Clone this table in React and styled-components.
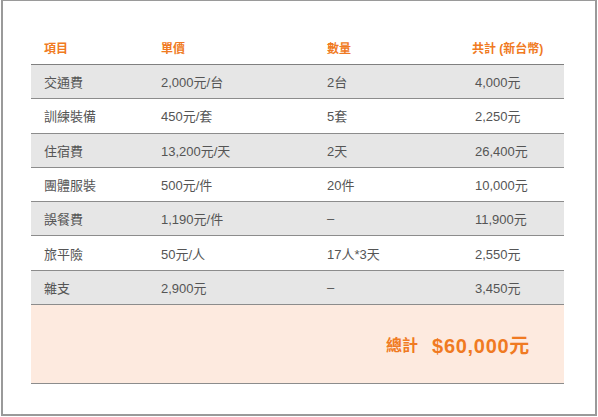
import styled, { createGlobalStyle } from "styled-components"

const GlobalStyle = createGlobalStyle`
  html, body {
    margin: 0;
    padding: 0;
    background: #ffffff;
  }
  body {
    font-family: "Liberation Sans", "Noto Sans CJK TC", sans-serif;
  }
`

const rows = [
  { item: "交通費", price: "2,000元/台", qty: "2台", total: "4,000元" },
  { item: "訓練裝備", price: "450元/套", qty: "5套", total: "2,250元" },
  { item: "住宿費", price: "13,200元/天", qty: "2天", total: "26,400元" },
  { item: "團體服裝", price: "500元/件", qty: "20件", total: "10,000元" },
  { item: "誤餐費", price: "1,190元/件", qty: "–", total: "11,900元" },
  { item: "旅平險", price: "50元/人", qty: "17人*3天", total: "2,550元" },
  { item: "雜支", price: "2,900元", qty: "–", total: "3,450元" },
]

function App() {
  return (
    <>
      <GlobalStyle />
      <Frame>
        <Table>
          <HeadRow>
            <HeadCell>項目</HeadCell>
            <HeadCell>單價</HeadCell>
            <HeadCell>數量</HeadCell>
            <HeadCell $last>共計 (新台幣)</HeadCell>
          </HeadRow>
          {rows.map((r, i) => (
            <Row key={r.item} $shaded={i % 2 === 0}>
              <Cell>{r.item}</Cell>
              <Cell>{r.price}</Cell>
              <Cell>{r.qty}</Cell>
              <Cell>{r.total}</Cell>
            </Row>
          ))}
          <TotalRow>
            <TotalLabel>總計</TotalLabel>
            <TotalValue>$60,000元</TotalValue>
          </TotalRow>
        </Table>
      </Frame>
    </>
  )
}

export default App

const Frame = styled.div`
  box-sizing: border-box;
  width: 596px;
  height: 416px;
  margin: 0 0 0 1px;
  border: 2px solid #9a9a9a;
  border-top-width: 1px;
  padding: 29px 31px 0 28px;
`

const Table = styled.div`
  width: 533px;
`

const cols = `117px 166px 148px 102px`

const HeadRow = styled.div`
  display: grid;
  grid-template-columns: ${cols};
  height: 35px;
  align-items: center;
  border-bottom: 1px solid #808080;
  box-sizing: border-box;
`

const HeadCell = styled.div`
  padding-left: ${(p) => (p.$last ? "10px" : "13px")};
  color: #f07a22;
  font-size: 12px;
  font-weight: bold;
  white-space: nowrap;
`

const Row = styled.div`
  display: grid;
  grid-template-columns: ${cols};
  height: 34.3px;
  box-sizing: border-box;
  align-items: center;
  background: ${(p) => (p.$shaded ? "#e6e6e6" : "#ffffff")};
  border-bottom: 1px solid #8c8c8c;
`

const Cell = styled.div`
  padding-left: 13px;
  color: #555555;
  font-size: 13px;
  white-space: nowrap;
`

const TotalRow = styled.div`
  height: 79px;
  box-sizing: border-box;
  background: #fdeadf;
  border-bottom: 1px solid #8c8c8c;
  display: flex;
  justify-content: flex-end;
  align-items: center;
  gap: 14px;
  padding-right: 34px;
  color: #f07a22;
  font-weight: bold;
`

const TotalLabel = styled.span`
  font-size: 16px;
`

const TotalValue = styled.span`
  font-size: 20px;
  letter-spacing: 0.7px;
`
